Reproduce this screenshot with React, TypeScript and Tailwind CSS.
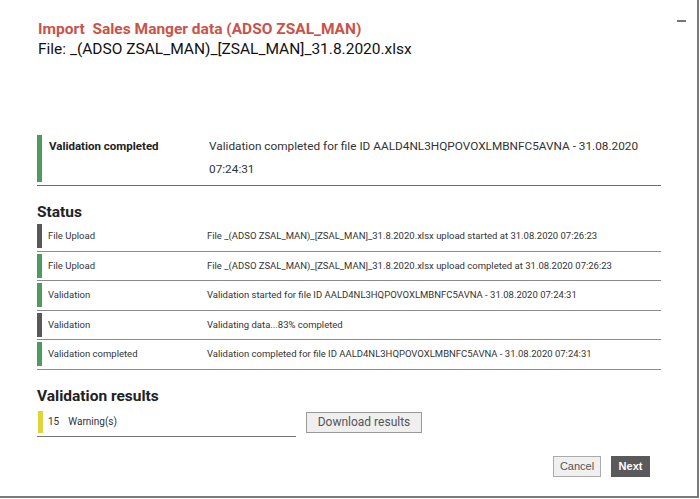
import React from "react";

type Row = { label: string; text: string; state: "done" | "busy" };

const ROWS: Row[] = [
  {
    label: "File Upload",
    text: "File _(ADSO ZSAL_MAN)_[ZSAL_MAN]_31.8.2020.xlsx upload started at 31.08.2020 07:26:23",
    state: "busy",
  },
  {
    label: "File Upload",
    text: "File _(ADSO ZSAL_MAN)_[ZSAL_MAN]_31.8.2020.xlsx upload completed at 31.08.2020 07:26:23",
    state: "done",
  },
  {
    label: "Validation",
    text: "Validation started for file ID AALD4NL3HQPOVOXLMBNFC5AVNA - 31.08.2020 07:24:31",
    state: "done",
  },
  {
    label: "Validation",
    text: "Validating data...83% completed",
    state: "busy",
  },
  {
    label: "Validation completed",
    text: "Validation completed for file ID AALD4NL3HQPOVOXLMBNFC5AVNA - 31.08.2020 07:24:31",
    state: "done",
  },
];

const App = () => {
  return (
    <div className="w-[700px] h-[499px] bg-white font-['Roboto','Liberation_Sans',sans-serif]">
      <div className="relative w-[699px] h-[498px] border-r-2 border-b-2 border-[#7a7a7a] pl-[37px] pr-[36px]">
        {/* minimize */}
        <div className="absolute right-[11px] top-[20px] w-[9px] h-[2px] bg-[#777]" />

        {/* Header */}
        <div className="pt-[19px]">
          <h1 className="text-[15.5px] leading-[20px] font-bold text-[#c9534a] pl-px">
            Import&nbsp; Sales Manger data (ADSO ZSAL_MAN)
          </h1>
          <p className="text-[15.5px] leading-[22px] text-[#111] -mt-px pl-px">
            File: _(ADSO ZSAL_MAN)_[ZSAL_MAN]_31.8.2020.xlsx
          </p>
        </div>

        {/* Summary */}
        <div className="mt-[75px] flex border-b border-[#6f6f6f] pb-[3px] w-[624px]">
          <div className="w-[5px] h-[47px] bg-[#4f9a5e] shrink-0" />
          <div className="w-[167px] pl-[7px] text-[11.5px] leading-[23px] font-bold text-[#222] shrink-0">
            Validation completed
          </div>
          <div className="flex-1 text-[11.8px] leading-[23px] text-[#333]">
            Validation completed for file ID AALD4NL3HQPOVOXLMBNFC5AVNA - 31.08.2020 07:24:31
          </div>
        </div>

        {/* Status */}
        <h2 className="mt-[16px] text-[15.5px] leading-[20px] font-bold text-[#222]">
          Status
        </h2>
        <div className="w-[624px]">
          {ROWS.map((row, i) => (
            <div
              key={i}
              className="flex items-center h-[29.5px] border-b border-[#8a8a8a]"
            >
              <div
                className={`w-[5px] h-[24px] shrink-0 ${
                  row.state === "done" ? "bg-[#4f9a5e]" : "bg-[#585858]"
                }`}
              />
              <div className="w-[165px] pl-[6px] text-[9.5px] text-[#333] shrink-0">
                {row.label}
              </div>
              <div className="flex-1 text-[9.5px] text-[#333] whitespace-nowrap">
                {row.text}
              </div>
            </div>
          ))}
        </div>

        {/* Validation results */}
        <h2 className="mt-[16px] text-[15.5px] leading-[20px] font-bold text-[#222]">
          Validation results
        </h2>
        <div className="flex items-start mt-[5px]">
          <div className="w-[259px] flex items-center border-b border-[#777] pb-[3px]">
            <div className="w-[5px] h-[22px] bg-[#dcd63a] shrink-0 ml-px" />
            <span className="ml-[5px] text-[10px] text-[#333]">15</span>
            <span className="ml-[9px] text-[10px] text-[#333]">Warning(s)</span>
          </div>
          <button className="ml-[10px] mt-px w-[116px] h-[21px] bg-[#efefef] border border-[#9a9a9a] text-[12px] text-[#555] leading-none">
            Download results
          </button>
        </div>

        {/* Footer */}
        <div className="flex justify-end gap-[10px] mt-[19px] pr-[11px]">
          <button className="w-[48px] h-[21px] bg-[#f0f0f0] border border-[#aaa] text-[11px] text-[#555] font-['Liberation_Sans',sans-serif] leading-none">
            Cancel
          </button>
          <button className="w-[39px] h-[21px] bg-[#5a5a5a] text-[11px] text-white font-bold font-['Liberation_Sans',sans-serif] leading-none">
            Next
          </button>
        </div>
      </div>
    </div>
  );
};

export default App;
